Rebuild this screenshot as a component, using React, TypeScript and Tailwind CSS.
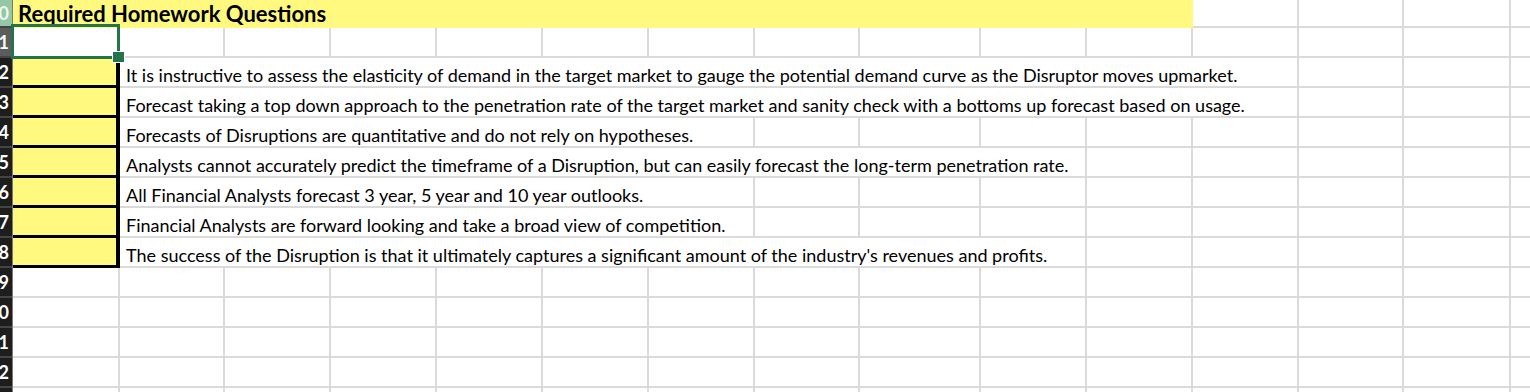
import React from "react";

const colW = [
  "w-[107px]",
  "w-[105px]",
  "w-[106px]",
  "w-[106px]",
  "w-[106px]",
  "w-[106px]",
  "w-[106px]",
  "w-[105px]",
  "w-[121px]",
  "w-[106px]",
  "w-[106px]",
  "w-[106px]",
  "w-[105px]",
  "w-[107px]",
  "w-[60px]",
];

const grid = "border-r-2 border-b-2 border-[#dadada]";

const questions: { text: string; hideUpTo: number }[] = [
  {
    text: "It is instructive to assess the elasticity of demand in the target market to gauge the potential demand curve as the Disruptor moves upmarket.",
    hideUpTo: 10,
  },
  {
    text: "Forecast taking a top down approach to the penetration rate of the target market and sanity check with a bottoms up forecast based on usage.",
    hideUpTo: 10,
  },
  {
    text: "Forecasts of Disruptions are quantitative and do not rely on hypotheses.",
    hideUpTo: 5,
  },
  {
    text: "Analysts cannot accurately predict the timeframe of a Disruption, but can easily forecast the long-term penetration rate.",
    hideUpTo: 8,
  },
  {
    text: "All Financial Analysts forecast 3 year, 5 year and 10 year outlooks.",
    hideUpTo: 5,
  },
  {
    text: "Financial Analysts are forward looking and take a broad view of competition.",
    hideUpTo: 5,
  },
  {
    text: "The success of the Disruption is that it ultimately captures a significant amount of the industry's revenues and profits.",
    hideUpTo: 8,
  },
];

function Header({ n, tone }: { n: number; tone: "green" | "gray" | "dark" }) {
  const bg =
    tone === "green"
      ? "bg-[#94c7a5] text-[#eef7f0]"
      : tone === "gray"
      ? "bg-[#5c5c5c] text-white"
      : "bg-[#1d1d1d] text-white";
  return (
    <div className="w-[13px] shrink-0 h-full flex border-r border-[#7a7a7a]">
      <div
        className={`w-[12px] h-full overflow-hidden flex items-center justify-end pr-[3px] border-b-2 border-[#444444] ${bg}`}
      >
        <span className="text-[18px] font-bold leading-none whitespace-nowrap">{n}</span>
      </div>
    </div>
  );
}

function PlainCells({ from }: { from: number }) {
  return (
    <>
      {colW.slice(from).map((w, i) => (
        <div key={i} className={`${w} shrink-0 h-full ${grid}`} />
      ))}
    </>
  );
}

export default function App() {
  return (
    <div className="relative w-[1530px] h-[392px] overflow-hidden bg-white font-['Lato',sans-serif] text-black">
      {/* Title row */}
      <div className="flex h-[28px]">
        <Header n={10} tone="green" />
        <div className="w-[1180px] shrink-0 h-full bg-[#fff980] flex items-end pl-[5px] pb-[3px]">
          <span className="text-[22px] font-bold leading-none whitespace-nowrap">
            Required Homework Questions
          </span>
        </div>
        <PlainCells from={11} />
      </div>

      {/* Row 1 */}
      <div className="flex h-[30px]">
        <Header n={11} tone="gray" />
        <PlainCells from={0} />
      </div>

      {/* Question rows */}
      {questions.map((q, idx) => (
        <div key={idx} className="flex h-[30px]">
          <Header n={12 + idx} tone="dark" />
          <div className="w-[107px] shrink-0 h-full bg-[#fff980] border-r-4 border-b-[3px] border-black" />
          {colW.slice(1).map((w, i) => {
            const col = i + 1;
            const hidden = col <= q.hideUpTo;
            return (
              <div
                key={col}
                className={`${w} shrink-0 h-full border-b-2 border-[#dadada] ${
                  hidden ? "" : "border-r-2"
                } ${col === 1 ? "flex items-end pl-[6px] pb-[2px]" : ""}`}
              >
                {col === 1 && (
                  <span className="text-[18px] leading-none whitespace-nowrap">{q.text}</span>
                )}
              </div>
            );
          })}
        </div>
      ))}

      {/* Empty rows */}
      {[19, 20, 21, 22, 23].map((n) => (
        <div key={n} className="flex h-[30px]">
          <Header n={n} tone="dark" />
          <PlainCells from={0} />
        </div>
      ))}

      {/* Selection overlay on A1 */}
      <div className="absolute left-[11px] top-[24px] w-[109px] h-[35px] border-[3px] border-[#23744a]" />
      <div className="absolute left-[113px] top-[52px] w-[11px] h-[10px] bg-[#23744a] outline outline-1 outline-white" />
    </div>
  );
}
